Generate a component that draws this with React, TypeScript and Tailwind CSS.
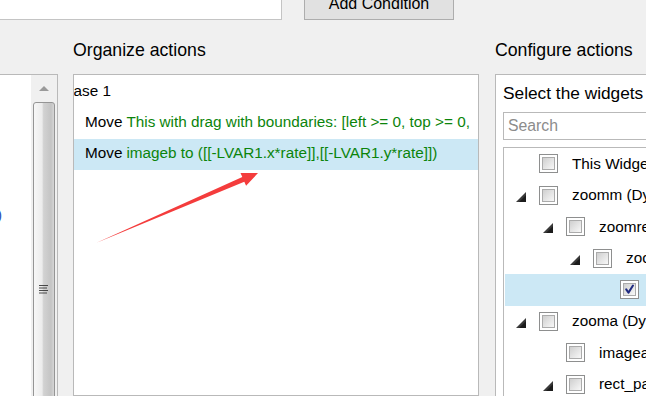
import React from 'react'

type TreeItem = {
  level: number
  label: string
  expandable?: boolean
  checked?: boolean
  selected?: boolean
}

const tree: TreeItem[] = [
  { level: 0, label: 'This Widget' },
  { level: 0, label: 'zoomm (Dynamic Panel)', expandable: true },
  { level: 1, label: 'zoomrect (Dynamic Panel)', expandable: true },
  { level: 2, label: 'zoomb (Dynamic Panel)', expandable: true },
  { level: 3, label: 'imageb', checked: true, selected: true },
  { level: 0, label: 'zooma (Dynamic Panel)', expandable: true },
  { level: 1, label: 'imagea' },
  { level: 1, label: 'rect_panel (Dynamic Panel)', expandable: true },
]

const indent = ['pl-[11px]', 'pl-[38px]', 'pl-[65px]', 'pl-[92px]']

function Checkbox({ checked }: { checked?: boolean }) {
  return (
    <div className="w-[19px] h-[19px] shrink-0 border border-[#8e8f8f] bg-white p-[2px]">
      <div className="w-full h-full border border-[#ababab] bg-[linear-gradient(135deg,#cfcfcf,#f8f8f8)]">
        {checked && (
          <svg viewBox="0 0 13 13" className="w-full h-full">
            <path
              d="M2.6 6.4 L5.3 10.2 L10.6 1.8"
              fill="none"
              stroke="#1f2a80"
              strokeWidth="2.4"
              strokeLinecap="round"
              strokeLinejoin="round"
            />
          </svg>
        )}
      </div>
    </div>
  )
}

function Expander({ show }: { show?: boolean }) {
  return (
    <div className="w-[10px] h-[10px] mt-[3px] shrink-0">
      {show && (
        <svg viewBox="0 0 10 10" width="10" height="10" className="block">
          <polygon points="10,0 10,10 0,10" fill="#3a3a3a" />
          <polygon points="10,3 10,10 3,10" fill="#1c1c1c" />
        </svg>
      )}
    </div>
  )
}

function TreeRow({ item }: { item: TreeItem }) {
  return (
    <div
      className={`h-[31.5px] flex items-center whitespace-nowrap ${indent[item.level]} ${
        item.selected ? 'bg-[#cce8f5]' : ''
      }`}
    >
      <Expander show={item.expandable} />
      <div className="ml-[13px]">
        <Checkbox checked={item.checked} />
      </div>
      <span className="ml-[14px]">{item.label}</span>
    </div>
  )
}

function ScrollBar() {
  return (
    <div className="w-[26px] shrink-0 bg-[#f0f0f0] flex flex-col">
      <div className="h-[26px] shrink-0 flex items-center justify-center">
        <svg viewBox="0 0 10 5" className="w-[10px] h-[5px]">
          <polygon points="5,0 10,5 0,5" fill="#9a9a9a" />
        </svg>
      </div>
      <div className="mt-[1px] ml-[2px] w-[22px] h-[373px] shrink-0 rounded-[3px] border border-[#959595] bg-[linear-gradient(to_right,#f7f7f7_0%,#ececec_40%,#d2d2d2_48%,#c4c4c4_85%,#d6d6d6_100%)] flex items-center justify-center">
        <svg viewBox="0 0 10 10" className="w-[10px] h-[10px]">
          <path d="M0 1.5H9M0 4H8M0 6.5H9M0 9H8" stroke="#2e2e2e" strokeWidth="1" opacity="0.85" />
        </svg>
      </div>
    </div>
  )
}

export default function App() {
  return (
    <div className="relative w-[646px] h-[396px] overflow-hidden bg-[#f0f0f0] text-black font-['Liberation_Sans',Arial,sans-serif]">
      {/* top strip: condition input + button, cut by the screenshot */}
      <div className="flex items-end h-[20px]">
        <div className="w-[282px] h-[32px] shrink-0 bg-white border-r border-b border-[#c4c4c4]" />
        <div className="ml-[22px] w-[150px] h-[33px] shrink-0 bg-[#e1e1e1] border border-[#adadad] flex items-center justify-center text-[16px] leading-[18px] whitespace-nowrap">
          Add Condition
        </div>
      </div>

      <div className="flex h-[376px]">
        {/* left list with scrollbar */}
        <div className="w-[58px] shrink-0 flex flex-col">
          <div className="h-[54px] shrink-0" />
          <div className="flex-1 flex bg-white border-t border-r border-[#b9b9b9] overflow-hidden">
            <div className="w-[31px] shrink-0 overflow-hidden">
              <div className="mt-[131px] -ml-[3px] text-[15.3px] leading-[18px] text-[#2a4fb8] whitespace-nowrap">
                )
              </div>
            </div>
            <ScrollBar />
          </div>
        </div>

        {/* organize actions */}
        <div className="ml-[15px] w-[406px] shrink-0 flex flex-col">
          <div className="h-[54px] shrink-0 pt-[21px] text-[17.7px] leading-[18px] whitespace-nowrap">
            Organize actions
          </div>
          <div className="flex-1 bg-white border border-[#b9b9b9] overflow-hidden text-[15.3px] leading-[18px] whitespace-nowrap">
            <div className="h-[31px] flex items-center">
              <span className="-ml-[11.5px]">Case 1</span>
            </div>
            <div className="h-[33px] pb-[2px] pl-[11px] flex items-center">
              <span>Move </span>
              <span className="text-[#0b840b] ml-[4px]">
                This with drag with boundaries: [left &gt;= 0, top &gt;= 0,
              </span>
            </div>
            <div className="h-[31px] pb-[4px] pl-[11px] flex items-center bg-[#cce8f5]">
              <span>Move </span>
              <span className="text-[#0b840b] ml-[4px]">
                imageb to ([[-LVAR1.x*rate]],[[-LVAR1.y*rate]])
              </span>
            </div>
          </div>
        </div>

        {/* configure actions */}
        <div className="ml-[16px] flex-1 min-w-0 flex flex-col">
          <div className="h-[54px] shrink-0 pt-[21px] text-[17.7px] leading-[18px] whitespace-nowrap">
            Configure actions
          </div>
          <div className="flex-1 bg-white border-l border-t border-[#b9b9b9] pl-[7px] overflow-hidden text-[15.3px] leading-[18px] whitespace-nowrap">
            <div className="pt-[9px] h-[27px] text-[17.3px]">Select the widgets to move</div>
            <input
              readOnly
              placeholder="Search"
              className="mt-[10px] block w-[200px] h-[28px] border border-[#b9b9b9] bg-white pl-[4px] outline-none text-[15.8px] placeholder:text-[#8c8c8c]"
            />
            <div className="mt-[7px] border-l border-t border-[#b9b9b9] h-[300px] w-[200px] pl-[1px]">
              {tree.map((item, i) => (
                <TreeRow key={i} item={item} />
              ))}
            </div>
          </div>
        </div>
      </div>

      {/* red annotation arrow */}
      <svg
        className="absolute inset-0 pointer-events-none"
        width="646"
        height="396"
        viewBox="0 0 646 396"
      >
        <polygon
          points="96,243 242.3,177 240.5,172.9 258,173 246.1,185.8 244.3,181.7"
          fill="#f43c3c"
        />
      </svg>
    </div>
  )
}
